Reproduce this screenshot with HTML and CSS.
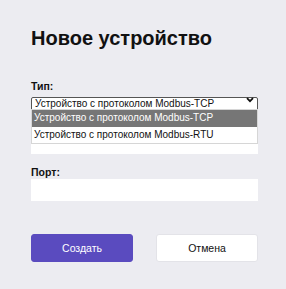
FILE: index.html
```html
<!DOCTYPE html>
<html>
  <head>
    <title>Новое устройство</title>
    <meta name="viewport" content="width=device-width, initial-scale=1.0" />
    <link rel="stylesheet" href="styles.css">
  </head>
  <body>
    <form class="device-form">
      <h1 class="title">Новое устройство</h1>
      <div class="fields">
        <div class="field">
          <label class="label" for="type">Тип:</label>
          <div class="select-wrap">
            <select class="select" id="type" name="type">
              <option>Устройство с протоколом Modbus-TCP</option>
              <option>Устройство с протоколом Modbus-RTU</option>
            </select>
            <svg class="chevron" width="8" height="6" viewBox="0 0 8 6">
              <path d="M1 1.2 L4 4.2 L7 1.2" fill="none" stroke="#111" stroke-width="1.8" />
            </svg>
            <!-- open dropdown list -->
            <ul class="options">
              <li class="option active">Устройство с протоколом Modbus-TCP</li>
              <li class="option">Устройство с протоколом Modbus-RTU</li>
            </ul>
          </div>
        </div>
        <!-- field under the open list, its label is covered -->
        <div class="field field-covered">
          <input class="input" type="text" name="address" aria-label="Адрес" />
        </div>
        <div class="field">
          <label class="label" for="port">Порт:</label>
          <input class="input" type="text" id="port" name="port" />
        </div>
      </div>
      <div class="actions">
        <button class="btn btn-primary" type="submit">Создать</button>
        <button class="btn" type="button">Отмена</button>
      </div>
    </form>
  </body>
</html>
```

FILE: styles.css
```css
body {
  margin: 0;
  background-color: #ececf1;
  font-family: "Liberation Sans", Arial, sans-serif;
  color: #111;
}
.device-form {
  width: 227px;
  padding: 27px 0 0 31px;
}
.title {
  margin: 0;
  font-size: 20px;
  line-height: 23px;
  font-weight: bold;
}
.fields {
  display: flex;
  flex-direction: column;
  gap: 12px;
  margin-top: 30px;
}
.field {
  display: flex;
  flex-direction: column;
}
.field-covered {
  padding-top: 9px;
}
.label {
  font-size: 10.5px;
  line-height: 12px;
  font-weight: bold;
  margin-bottom: 1px;
}
.select-wrap {
  position: relative;
}
.select {
  appearance: none;
  width: 100%;
  height: 14px;
  margin: 0;
  padding: 0 0 0 3px;
  border: 1px solid #555;
  border-radius: 2px;
  background-color: #fff;
  font-family: inherit;
  font-size: 10px;
  line-height: 12px;
  color: #111;
}
.chevron {
  position: absolute;
  right: 4px;
  top: 4px;
}
.options {
  position: absolute;
  top: 16px;
  left: 0;
  right: 0;
  margin: 0;
  padding: 0;
  list-style: none;
  background-color: #fff;
  border: 1px solid #d6d6d6;
  z-index: 2;
}
.option {
  height: 16.5px;
  line-height: 16px;
  padding-left: 2px;
  font-size: 10px;
  color: #111;
}
.option.active {
  background-color: #767676;
  color: #fff;
}
.input {
  height: 22px;
  margin: 0;
  padding: 0 4px;
  border: 0;
  background-color: #fff;
  font-family: inherit;
  font-size: 10px;
}
.input:focus {
  outline: 0;
}
.actions {
  display: flex;
  gap: 23px;
  margin-top: 33px;
}
.btn {
  width: 102px;
  height: 28px;
  border: 1px solid #e3e3e8;
  border-radius: 3px;
  background-color: #fff;
  font-family: inherit;
  font-size: 10.5px;
  color: #111;
  cursor: pointer;
}
.btn-primary {
  border-color: #5a4bbf;
  background-color: #5a4bbf;
  color: #fff;
}
```
